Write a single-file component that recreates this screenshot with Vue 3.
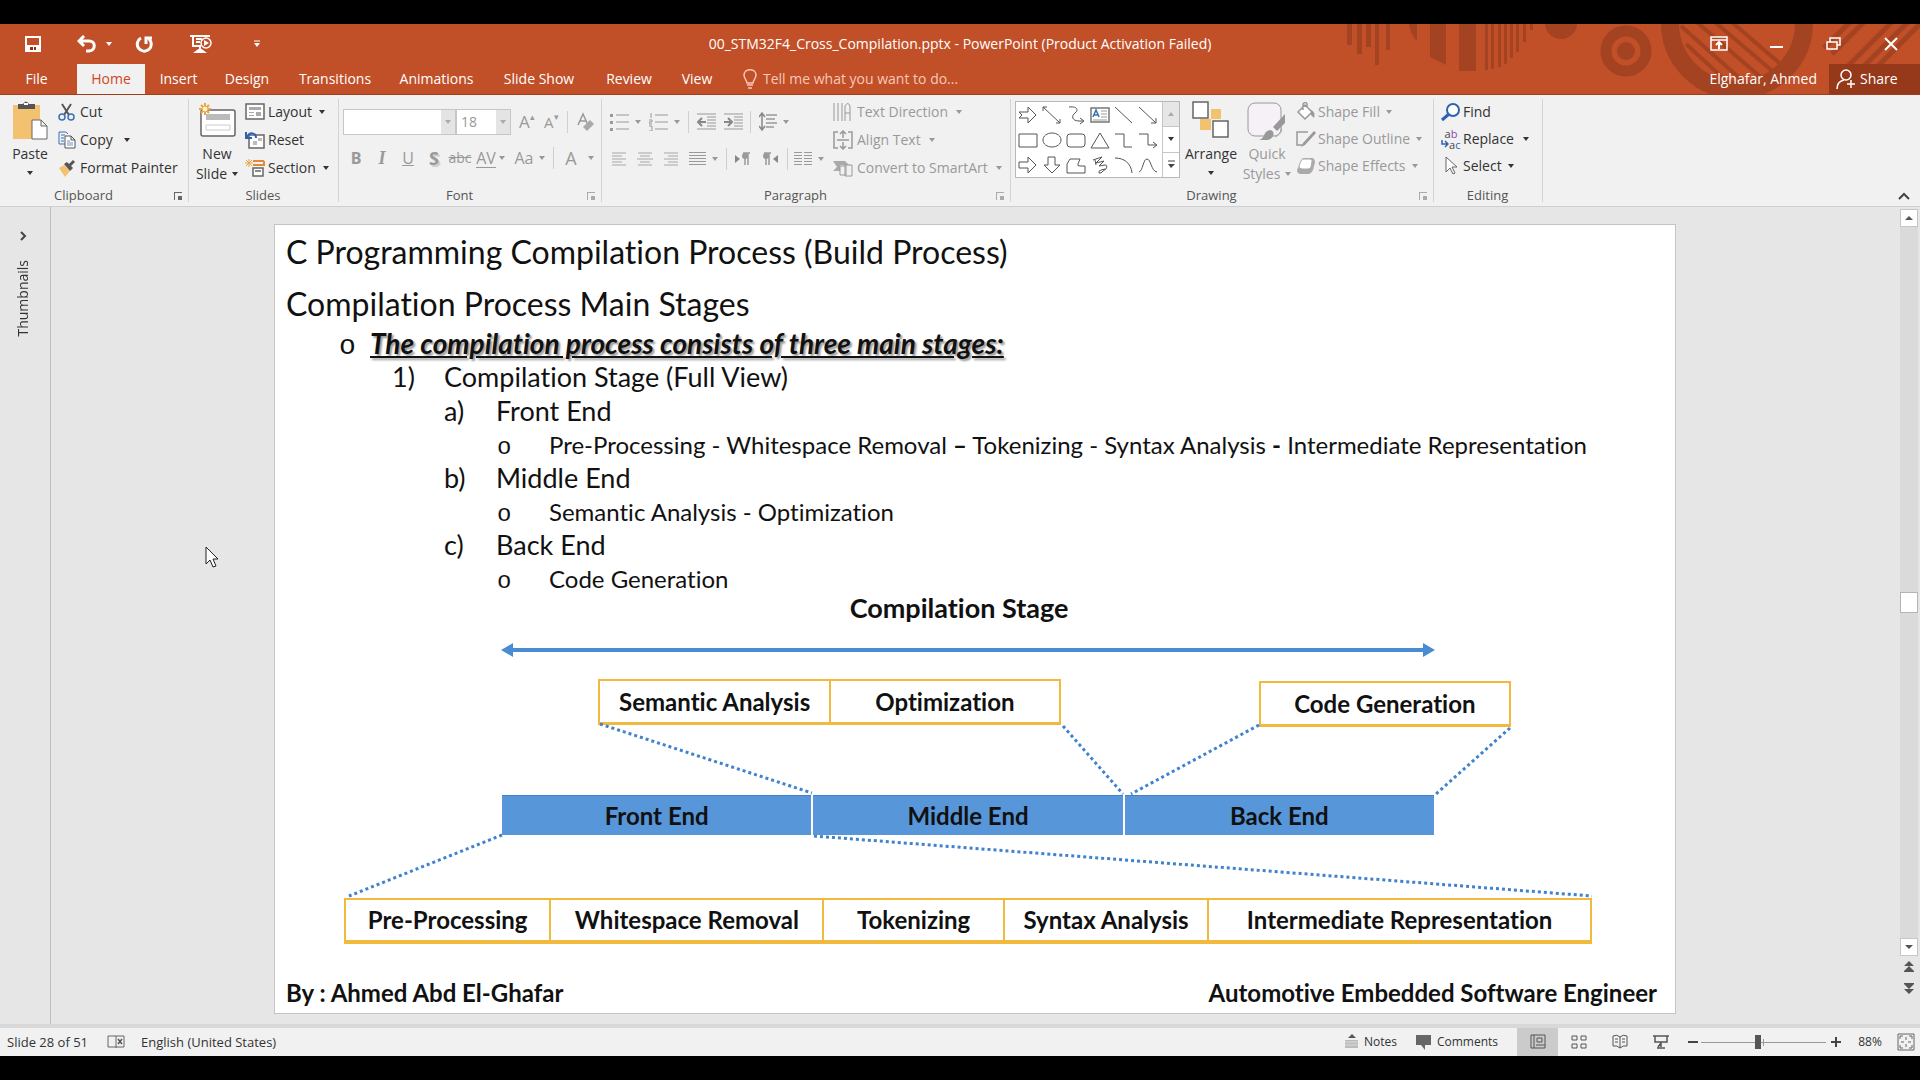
<script setup>
import { ref } from 'vue'

const zoom = ref(45)

const tabs = ['File', 'Home', 'Insert', 'Design', 'Transitions', 'Animations', 'Slide Show', 'Review', 'View']

const outline = [
  { level: 1, mark: 'o', text: 'The compilation process consists of three main stages:' },
  { level: 2, mark: '1)', text: 'Compilation Stage (Full View)' },
  { level: 3, mark: 'a)', text: 'Front End' },
  { level: 4, mark: 'o', text: 'Pre-Processing - Whitespace Removal <b>–</b> Tokenizing - Syntax Analysis <b>-</b> Intermediate Representation' },
  { level: 3, mark: 'b)', text: 'Middle End' },
  { level: 4, mark: 'o', text: 'Semantic Analysis - Optimization' },
  { level: 3, mark: 'c)', text: 'Back End' },
  { level: 4, mark: 'o', text: 'Code Generation' },
]

const shapes = [
  'M1 7h9V2l8 8-8 8v-5H1l3-3z',
  'M1 2l17 16M1 6V2h4M18 14v4h-4',
  'M3 2c8-1 10 3 6 6s-3 8 4 8h4M14 13l4 3-4 3',
  '',
  'M1 2l17 16',
  'M1 2l17 16M18 13v5h-5',
  'M1 4h18v13H1z',
  'M10 3c5 0 9 3 9 7s-4 7-9 7-9-3-9-7 4-7 9-7z',
  'M4 4h12q3 0 3 3v7q0 3-3 3H4q-3 0-3-3V7q0-3 3-3z',
  'M10 3l9 15H1z',
  'M1 4h9v13h8',
  'M1 4h9v11h8M15 12l4 3-4 3',
  'M1 7h9V2l8 8-8 8v-5H1z',
  'M6 2h7v8h5l-8 8-8-8h4z',
  'M4 4h10l-2 5q-1 2 2 2h5v7H1V9z',
  'M3 5l9-3-6 6 8-2-5 5 6-1q3 0 1 4l-3 2q-2 3-4 2-1-2 2-3l4-1M5 5l1 5',
  'M1 3c9 0 16 5 17 15',
  'M1 17c4-1 4-13 8-13s4 12 10 13',
]
</script>

<template>
  <div class="screen">
    <header class="top">
      <svg class="deco" viewBox="0 0 580 70" width="580" height="70" aria-hidden="true">
        <g fill="#a44322">
          <path d="M7 0h5v21H7zM17 0h5v30h-5zM26 0h5v23h-5zM35 0h4v41h-4zM46 0h4v26h-4zM69 0h8v17q-6-5-8-17zM90 0h16v41l-16-8zM119 0h17v47h-17z" />
          <path d="M145 0h3v46h-3zM151 0h3v45h-3zM158 0h3v43h-3zM164 0h3v40h-3zM170 0h3v34h-3zM176 0h3v28h-3zM183 0h3v18h-3zM190 0h3v6h-3z" />
          <circle cx="221" cy="-1" r="16" /><circle cx="286" cy="27" r="9" />
        </g>
        <g fill="none" stroke="#a44322">
          <circle cx="286" cy="27" r="20" stroke-width="11" />
          <circle cx="397" cy="-1" r="67" stroke-width="18" />
          <path d="M341 2l74 66M346 20l50 46M352-6l72 62M370-6l66 56M380-12l65 56" stroke-width="4" />
          <path d="M502 48l54-54M518 48l54-54M532 48l54-54M484 24l30-30M492 30l36-36" stroke-width="5" />
        </g>
      </svg>
      <div class="titlebar">
        <div class="quick">
          <button aria-label="Save"><svg width="18" height="18" viewBox="0 0 18 18"><path d="M2 2h14v14H2z" fill="none" stroke="#fff" stroke-width="2" /><path d="M2 10h14v6H2z" fill="#fff" /><path d="M6 12h3v3H6zM10 12h2v3h-2z" fill="#a02c10" /></svg></button>
          <button class="undo" aria-label="Undo"><svg width="20" height="18" viewBox="0 0 20 18"><path d="M2 6h10c7 0 7 9 0 10H9M7 1L2 6l5 5" fill="none" stroke="#fff" stroke-width="3" /></svg></button>
          <button class="more" aria-label="Undo history"><i class="caret"></i></button>
          <button class="redo" aria-label="Repeat"><svg width="19" height="18" viewBox="0 0 19 18"><path d="M6 3a7 7 0 1 0 8 1M11 9V3h6" fill="none" stroke="#fff" stroke-width="3" /></svg></button>
          <button class="show" aria-label="Start slide show"><svg width="22" height="20" viewBox="0 0 22 20"><path d="M0 2h20M3 2v10h8M6 5h6M6 8h4M10 13v3M6 18h8l-4-3z" fill="none" stroke="#fff" stroke-width="2" /><circle cx="16" cy="9" r="5" fill="#c14f28" stroke="#fff" stroke-width="1.500" /><path d="M14 6l5 3-5 3z" fill="#fff" /></svg></button>
          <button class="custom" aria-label="Customize toolbar"><svg width="8" height="8" viewBox="0 0 8 8"><path d="M1 1h6" stroke="#fff" /><path d="M1 3h6L4 7z" fill="#fff" /></svg></button>
        </div>
        <div class="title">00_STM32F4_Cross_Compilation.pptx - PowerPoint (Product Activation Failed)</div>
        <div class="window">
          <button aria-label="Ribbon display options"><svg width="18" height="16" viewBox="0 0 18 16"><path d="M1 1h16v13H1zM1 4h16" fill="none" stroke="#fff" stroke-width="1.500" /><path d="M9 13V7M6 9l3-3 3 3" fill="none" stroke="#fff" stroke-width="2" /></svg></button>
          <button aria-label="Minimize"><svg width="14" height="16" viewBox="0 0 14 16"><path d="M0 11h13" stroke="#fff" stroke-width="2" /></svg></button>
          <button aria-label="Restore"><svg width="16" height="16" viewBox="0 0 16 16"><path d="M1 6h10v7H1zM4 6V2h10v7h-3" fill="none" stroke="#fff" stroke-width="1.500" /></svg></button>
          <button aria-label="Close"><svg width="14" height="16" viewBox="0 0 14 16"><path d="M1 2l12 12M13 2L1 14" stroke="#fff" stroke-width="2" /></svg></button>
        </div>
      </div>
      <div class="tabrow">
        <nav class="tabs">
          <button v-for="t in tabs" :key="t" :class="{ active: t === 'Home' }">{{ t }}</button>
        </nav>
        <label class="tell">
          <svg width="14" height="20" viewBox="0 0 14 20"><path d="M4 14c0-3-3-4-3-8 0-7 12-7 12 0 0 4-3 5-3 8zM4 16h6M5 19h4" fill="none" stroke="#f6c9b8" stroke-width="1.500" /></svg>
          <input type="text" placeholder="Tell me what you want to do..." />
        </label>
        <button class="user">Elghafar, Ahmed</button>
        <button class="share"><svg width="20" height="20" viewBox="0 0 20 20"><circle cx="10" cy="6" r="5" fill="none" stroke="#fff" stroke-width="1.500" /><path d="M1 20c0-5 3-8 7-9M15 11v8M11 15h8" fill="none" stroke="#fff" stroke-width="1.500" /></svg>Share</button>
      </div>
    </header>

    <section class="ribbon">
      <div class="group clipboard">
        <div class="body">
          <button class="big paste">
            <svg width="36" height="40" viewBox="0 0 36 40"><path d="M1 4h27v34H1z" fill="#f3c271" /><path d="M6 3h5q3-5 6 0h6v5H6z" fill="#555" /><path d="M12 3h4" stroke="#fff" stroke-width="2" /><path d="M20 19h9l6 6v13H20zM29 19v6h6" fill="#fff" stroke="#666" /></svg>
            <span>Paste</span><i class="caret"></i>
          </button>
          <div class="stack">
            <button><svg width="18" height="18" viewBox="0 0 18 18"><path d="M4 1l7 11M13 1L6 12" stroke="#555" stroke-width="2" /><circle cx="4" cy="14" r="3" fill="none" stroke="#3c71b4" stroke-width="1.500" /><circle cx="13" cy="14" r="3" fill="none" stroke="#3c71b4" stroke-width="1.500" /></svg>Cut</button>
            <button><svg width="18" height="18" viewBox="0 0 18 18"><path d="M7 13H1V1h7l2 2M3 4h4M3 7h3M3 10h3" fill="none" stroke="#3c71b4" /><path d="M7 5h6l4 4v8H7zM13 5v4h4" fill="#fff" stroke="#555" /><path d="M9 10h3M9 12h6M9 14h6" stroke="#6f93c4" /></svg>Copy<i class="caret wide"></i></button>
            <button><svg width="18" height="18" viewBox="0 0 18 18"><path d="M1 9l5-3 6 6-5 6z" fill="#f3c271" /><path d="M6 5l3-2 2 2 4-4 2 2-4 4 2 2-3 3z" fill="#555" /></svg>Format Painter</button>
          </div>
        </div>
        <div class="label">Clipboard</div><button class="launch dark" aria-label="Clipboard options"></button>
      </div>

      <div class="group slides">
        <div class="body">
          <button class="big">
            <svg width="40" height="40" viewBox="0 0 40 40"><rect x="4" y="9" width="34" height="26" rx="2" fill="#fff" stroke="#666" stroke-width="1.500" /><path d="M9 13h24v6H9z" fill="#bbb" /><path d="M9 24h24v5H9z" fill="none" stroke="#ccc" /><path d="M8 2v12M2 8h12M4 4l8 8M12 4l-8 8" stroke="#e9a544" stroke-width="2" /><circle cx="8" cy="8" r="3" fill="#fff2cf" stroke="#e9a544" /></svg>
            <span>New</span><span>Slide<i class="caret"></i></span>
          </button>
          <div class="stack">
            <button><svg width="20" height="18" viewBox="0 0 20 18"><path d="M1 1h18v15H1z" fill="#fff" stroke="#666" stroke-width="1.500" /><path d="M4 4h12v3H4zM4 9h5v1H4zM4 12h5v1H4zM11 9h5v4h-5z" fill="#aaa" /></svg>Layout<i class="caret"></i></button>
            <button><svg width="20" height="18" viewBox="0 0 20 18"><path d="M4 4h15v13H4z" fill="#fff" stroke="#666" stroke-width="1.500" /><path d="M8 10h4v4H8zM13 7h4v3h-4z" fill="#bbb" /><path d="M2 6c3-6 9-4 9 1M1 1v6h6" fill="none" stroke="#2d62ae" stroke-width="2" /></svg>Reset</button>
            <button><svg width="20" height="18" viewBox="0 0 20 18"><path d="M8 2h11M8 6h11V2" fill="none" stroke="#e28a35" stroke-width="2" /><path d="M8 9h10v8H8zM10 12h6" fill="#fff" stroke="#666" stroke-width="1.500" /><path d="M4 0v8M0 4h8M1 1l6 6M7 1L1 7" stroke="#e9a544" /></svg>Section<i class="caret"></i></button>
          </div>
        </div>
        <div class="label">Slides</div>
      </div>

      <div class="group font off">
        <div class="body">
          <div class="line combos">
            <span class="combo family"><select aria-label="Font" disabled><option></option></select><i class="caret"></i></span>
            <span class="combo size"><select aria-label="Font size" disabled><option>18</option></select><i class="caret"></i></span>
            <button class="glyph" disabled>A<sup>▴</sup></button>
            <button class="glyph small" disabled>A<sup>▾</sup></button>
            <i class="sep"></i>
            <button disabled aria-label="Clear formatting"><svg width="18" height="20" viewBox="0 0 18 20"><path d="M1 13L6 2l5 11M3 9h6" fill="none" stroke="#999" stroke-width="1.500" /><path d="M6 15l7-7 4 4-7 7z" fill="#aaa" /></svg></button>
          </div>
          <div class="line styles">
            <button disabled><b>B</b></button><button disabled><em>I</em></button><button disabled><u>U</u></button>
            <button disabled class="shadow"><b>S</b></button><button disabled class="strike"><s>abc</s></button>
            <button disabled class="spacing"><span>AV</span></button><i class="caret"></i>
            <button disabled class="case">Aa</button><i class="caret"></i><i class="sep"></i>
            <button disabled class="color">A</button><i class="caret"></i>
          </div>
        </div>
        <div class="label">Font</div><button class="launch" aria-label="Font options"></button>
      </div>

      <div class="group para off">
        <div class="body">
          <div class="tools">
            <div class="line one">
              <button disabled aria-label="Bullets"><svg width="19" height="18" viewBox="0 0 19 18"><path d="M6 2h13M6 9h13M6 16h13" stroke="#999" /><path d="M0 1h3v3H0zM0 8h3v3H0zM0 15h3v3H0z" fill="#999" /></svg></button><i class="caret"></i>
              <button disabled aria-label="Numbering"><svg width="19" height="18" viewBox="0 0 19 18"><path d="M6 2h13M6 9h13M6 16h13M2 0v5M0 7h3v2H0v2h3M0 13h3v5H0" fill="none" stroke="#999" /></svg></button><i class="caret"></i>
              <i class="sep"></i>
              <button disabled aria-label="Decrease indent"><svg width="19" height="18" viewBox="0 0 19 18"><path d="M0 1h19M10 4h9M10 7h9M10 10h9M10 13h9M0 16h19" stroke="#999" /><path d="M1 9h8M5 5L1 9l4 4" fill="none" stroke="#888" stroke-width="2" /></svg></button>
              <button disabled aria-label="Increase indent"><svg width="19" height="18" viewBox="0 0 19 18"><path d="M0 1h19M10 4h9M10 7h9M10 10h9M10 13h9M0 16h19" stroke="#999" /><path d="M0 9h8M4 5l4 4-4 4" fill="none" stroke="#888" stroke-width="2" /></svg></button>
              <i class="sep"></i>
              <button disabled aria-label="Line spacing"><svg width="18" height="20" viewBox="0 0 18 20"><path d="M7 3h11M7 7h9M7 11h11M7 15h8" stroke="#999" stroke-width="1.500" /><path d="M3 1v17M0 5l3-4 3 4M0 14l3 4 3-4" fill="none" stroke="#888" stroke-width="1.500" /></svg></button><i class="caret"></i>
            </div>
            <div class="line two">
              <button disabled aria-label="Align left"><svg width="14" height="14" viewBox="0 0 14 14"><path d="M0 1h14M0 4h10M0 7h14M0 10h10M0 13h14" stroke="#ccc" stroke-width="2" /></svg></button>
              <button disabled aria-label="Center"><svg width="16" height="14" viewBox="0 0 16 14"><path d="M1 1h14M3 4h10M0 7h16M3 10h10M1 13h14" stroke="#ccc" stroke-width="2" /></svg></button>
              <button disabled aria-label="Align right"><svg width="14" height="14" viewBox="0 0 14 14"><path d="M0 1h14M4 4h10M0 7h14M4 10h10M0 13h14" stroke="#ccc" stroke-width="2" /></svg></button>
              <button disabled aria-label="Justify"><svg width="17" height="14" viewBox="0 0 17 14"><path d="M0 .5h17M0 3.500h17M0 6.500h17M0 9.500h17M0 12.500h17" stroke="#999" /></svg></button><i class="caret"></i>
              <i class="sep"></i>
              <button disabled aria-label="Left to right"><svg width="16" height="14" viewBox="0 0 16 14"><path d="M0 3l5 4-5 4z" fill="#888" /><path d="M10 1v12M13 1v12M8 1h7" stroke="#999" stroke-width="1.500" /><circle cx="10" cy="4" r="3" fill="#999" /></svg></button>
              <button disabled aria-label="Right to left"><svg width="16" height="14" viewBox="0 0 16 14"><path d="M16 3l-5 4 5 4z" fill="#888" /><path d="M4 1v12M7 1v12M2 1h7" stroke="#999" stroke-width="1.500" /><circle cx="4" cy="4" r="3" fill="#999" /></svg></button>
              <i class="sep"></i>
              <button disabled aria-label="Columns"><svg width="18" height="14" viewBox="0 0 18 14"><path d="M0 .5h8M0 3.500h8M0 6.500h8M0 9.500h8M0 12.500h8M10 .5h8M10 3.500h8M10 6.500h8M10 9.500h8M10 12.500h8" stroke="#999" /></svg></button><i class="caret"></i>
            </div>
          </div>
          <div class="stack">
            <button disabled><svg width="20" height="20" viewBox="0 0 20 20"><path d="M1 1v18M5 1v18M9 1v18M12 19V4q3-5 5 0v15M12 11h5" fill="none" stroke="#999" /></svg>Text Direction<i class="caret"></i></button>
            <button disabled><svg width="20" height="20" viewBox="0 0 20 20"><path d="M5 2H1v16h4M15 2h4v16h-4M4 10h12M10 1v7M10 12v7M7 4l3-3 3 3M7 16l3 3 3-3" fill="none" stroke="#999" stroke-width="1.500" /></svg>Align Text<i class="caret"></i></button>
            <button disabled><svg width="20" height="18" viewBox="0 0 20 18"><path d="M0 2h12l4 4h-9v6H0l4-4z" fill="#aaa" /><path d="M7 7h6v9H7zM12 6h7v11h-7z" fill="#f1f1f1" stroke="#999" /></svg>Convert to SmartArt<i class="caret"></i></button>
          </div>
        </div>
        <div class="label">Paragraph</div><button class="launch" aria-label="Paragraph options"></button>
      </div>

      <div class="group drawing">
        <div class="body">
          <div class="gallery">
            <div class="cells">
              <button v-for="(d, i) in shapes" :key="i" aria-label="Shape">
                <svg width="20" height="20" viewBox="0 0 20 20">
                  <path v-if="d" :d="d" fill="none" stroke="#555" />
                  <template v-else><path d="M1 3h18v14H1z" fill="#fff" stroke="#777" stroke-width="1.500" /><path d="M3 12l3-7 3 7M4 10h4" fill="none" stroke="#3c71b4" stroke-width="1.500" /><path d="M11 6h6M11 9h6M11 12h6M3 15h14" stroke="#999" /></template>
                </svg>
              </button>
            </div>
            <div class="scroller">
              <button class="dim" aria-label="Previous shapes"><i class="caret up"></i></button>
              <button aria-label="Next shapes"><i class="caret"></i></button>
              <button aria-label="All shapes"><svg width="9" height="9" viewBox="0 0 9 9"><path d="M1 1h7" stroke="#444" /><path d="M1 4h7L4 8z" fill="#444" /></svg></button>
            </div>
          </div>
          <button class="big arrange">
            <svg width="38" height="38" viewBox="0 0 38 38"><path d="M19 8h10v10H19zM8 18h11v11H8z" fill="#f3c271" /><path d="M1 1h15v16H1zM21 20h15v16H21z" fill="#fff" stroke="#666" stroke-width="1.500" /></svg>
            <span>Arrange</span><i class="caret"></i>
          </button>
          <button class="big styles-btn" disabled>
            <svg width="40" height="40" viewBox="0 0 40 40"><rect x="1" y="2" width="33" height="33" rx="7" fill="#f5f1f7" stroke="#999" /><path d="M38 13v9l-8 8-4-4z" fill="#999" /><path d="M12 39c6-1 4-9 11-10 6 1 4 9-3 10z" fill="#999" /><path d="M28 36c5-2 8-6 6-10" fill="none" stroke="#aaa" /></svg>
            <span>Quick</span><span>Styles<i class="caret"></i></span>
          </button>
          <div class="stack">
            <button disabled><svg width="20" height="20" viewBox="0 0 20 20"><path d="M9 3l7 7-7 7-7-7zM7 8V2q3-3 4 0v3" fill="#fff" stroke="#999" stroke-width="1.500" /><path d="M15 8q5 2 3 8l-3-3z" fill="#999" /></svg>Shape Fill<i class="caret"></i></button>
            <button disabled><svg width="20" height="20" viewBox="0 0 20 20"><path d="M12 3H1v13h5" fill="none" stroke="#999" stroke-width="1.500" /><path d="M18 2l2 2-11 12-4 2 2-4z" fill="#999" /></svg>Shape Outline<i class="caret"></i></button>
            <button disabled><svg width="20" height="20" viewBox="0 0 20 20"><path d="M7 2h10q2 2 2 4l-2 8q-2 4-5 4H4q-3-1-3-4z" fill="#aaa" /><path d="M7 3h7q3 0 2 3l-1 5q-1 2-3 2H6q-3 0-3-3l2-5q1-2 2-2z" fill="#fff" stroke="#aaa" /></svg>Shape Effects<i class="caret"></i></button>
          </div>
        </div>
        <div class="label">Drawing</div><button class="launch" aria-label="Drawing options"></button>
      </div>

      <div class="group editing">
        <div class="body">
          <div class="stack">
            <button><svg width="20" height="20" viewBox="0 0 20 20"><circle cx="12" cy="8" r="6" fill="#fff" stroke="#2d62ae" stroke-width="2" /><path d="M8 12l-7 6" stroke="#2d62ae" stroke-width="3" /></svg>Find</button>
            <button><span class="swap"><span>a<b>b</b></span><span class="to"><svg width="8" height="8" viewBox="0 0 8 8"><path d="M1 0v4h5M4 1l3 3-3 3" fill="none" stroke="#2d62ae" stroke-width="1.500" /></svg>a<i>c</i></span></span>Replace<i class="caret wide"></i></button>
            <button><svg width="20" height="20" viewBox="0 0 20 20"><path d="M5 1v15l4-4 3 6 2-1-3-6h5z" fill="#fff" stroke="#666" /></svg>Select<i class="caret"></i></button>
          </div>
        </div>
        <div class="label">Editing</div>
      </div>
      <button class="collapse" aria-label="Collapse ribbon"><svg width="12" height="8" viewBox="0 0 12 8"><path d="M1 7l5-5 5 5" fill="none" stroke="#444" stroke-width="2" /></svg></button>
    </section>

    <main class="work">
      <aside class="thumbs">
        <button aria-label="Expand thumbnails"><svg width="8" height="10" viewBox="0 0 8 10"><path d="M2 1l4 4-4 4" fill="none" stroke="#444" stroke-width="2" /></svg></button>
        <span>Thumbnails</span>
      </aside>
      <div class="stage">
        <svg class="cursor" width="14" height="22" viewBox="0 0 14 22" aria-hidden="true"><path d="M1 1v17l4-4 3 7 3-1-3-7h5z" fill="#fff" stroke="#222" /></svg>
        <article class="slide">
          <h1>C Programming Compilation Process (Build Process)</h1>
          <h2>Compilation Process Main Stages</h2>
          <ul class="outline">
            <li v-for="(o, i) in outline" :key="i" :class="'l' + o.level">
              <span class="mark" :class="{ ring: o.mark === 'o' }">{{ o.mark }}</span><span class="txt" v-html="o.text"></span>
            </li>
          </ul>
          <div class="diagram">
            <svg class="links" viewBox="0 0 1248 347" preserveAspectRatio="none" aria-hidden="true">
              <path d="M256 129l212 69M719 131l60 68M915 130l-128 69M1166 133l-74 66M158 240L5 301M470 241l778 60" fill="none" stroke="#3f82ce" stroke-width="3" stroke-dasharray="3 3" />
            </svg>
            <h3>Compilation Stage</h3>
            <svg class="span" viewBox="0 0 932 14" preserveAspectRatio="none" aria-hidden="true"><path d="M0 7L12 0v5h908V0l12 7-12 7V9H12v5z" fill="#4a8cd3" /></svg>
            <div class="upper">
              <div class="cell first">Semantic Analysis</div>
              <div class="cell">Optimization</div>
              <div class="cell gen">Code Generation</div>
            </div>
            <div class="ends"><div>Front End</div><div>Middle End</div><div>Back End</div></div>
            <div class="lower">
              <div>Pre-Processing</div><div>Whitespace Removal</div><div>Tokenizing</div><div>Syntax Analysis</div><div>Intermediate Representation</div>
            </div>
          </div>
          <footer><span>By : Ahmed Abd El-Ghafar</span><span>Automotive Embedded Software Engineer</span></footer>
        </article>
      </div>
      <div class="vscroll">
        <button aria-label="Scroll up"><i class="caret up"></i></button>
        <div class="track"><div class="thumb"></div></div>
        <button aria-label="Scroll down"><i class="caret"></i></button>
        <button class="jump" aria-label="Previous slide"><svg width="10" height="12" viewBox="0 0 10 12"><path d="M5 0l5 5H0zM5 5l5 5H0zM0 10h10v1H0z" fill="#555" /></svg></button>
        <button class="jump" aria-label="Next slide"><svg width="10" height="12" viewBox="0 0 10 12"><path d="M0 1h10L5 6zM0 6h10l-5 5zM0 0h10v1H0z" fill="#555" /></svg></button>
      </div>
    </main>

    <footer class="status">
      <span class="count">Slide 28 of 51</span>
      <button class="spell" aria-label="Spelling"><svg width="18" height="16" viewBox="0 0 18 16"><path d="M9 2v12M9 2H1v11h8M9 2h8v11H9" fill="none" stroke="#666" /><path d="M11 5l4 5M15 5l-4 5" stroke="#555" stroke-width="1.500" /></svg></button>
      <button class="lang">English (United States)</button>
      <div class="right">
        <button class="notes"><svg width="14" height="16" viewBox="0 0 14 16"><path d="M7 0l4 4H3z" fill="#555" /><path d="M0 6h13v8H0z" fill="#bbb" /><path d="M0 8h13M0 11h13" stroke="#ddd" /></svg>Notes</button>
        <button class="comments"><svg width="16" height="16" viewBox="0 0 16 16"><path d="M0 1h15v10H9v5l-4-5H0z" fill="#666" /></svg>Comments</button>
        <button class="view on" aria-label="Normal"><svg width="16" height="16" viewBox="0 0 16 16"><path d="M1 1h14v13H1zM4 1v13M6 11h9M7 4h5v4H7z" fill="none" stroke="#555" /></svg></button>
        <button class="view" aria-label="Slide sorter"><svg width="16" height="16" viewBox="0 0 16 16"><path d="M1 2h5v4H1zM10 2h5v4h-5zM1 10h5v4H1zM10 10h5v4h-5z" fill="none" stroke="#555" /></svg></button>
        <button class="view" aria-label="Reading view"><svg width="16" height="16" viewBox="0 0 16 16"><path d="M8 3v11M8 3Q5 0 1 2v10q4-1 7 2 3-3 7-2V2q-4-2-7 1M3 5h3M3 8h3M10 5h3M10 8h3" fill="none" stroke="#555" /></svg></button>
        <button class="view" aria-label="Slide show"><svg width="16" height="16" viewBox="0 0 16 16"><path d="M0 2h16M2 2v6h12V2M8 8v5M4 14h8M8 9l-3 4" fill="none" stroke="#555" stroke-width="1.500" /></svg></button>
        <button class="step" aria-label="Zoom out"><svg width="12" height="12" viewBox="0 0 12 12"><path d="M1 6h10" stroke="#444" stroke-width="2" /></svg></button>
        <input v-model="zoom" type="range" min="0" max="100" aria-label="Zoom" />
        <button class="step" aria-label="Zoom in"><svg width="12" height="12" viewBox="0 0 12 12"><path d="M1 6h10M6 1v10" stroke="#444" stroke-width="2" /></svg></button>
        <button class="pct">88%</button>
        <button class="fit" aria-label="Fit slide"><svg width="18" height="18" viewBox="0 0 18 18"><path d="M1 1h16v16H1z" fill="none" stroke="#666" /><path d="M9 4v3M9 11v3M4 9h3M11 9h3M3 6V3h3M12 3h3v3M3 12v3h3M12 15h3v-3" fill="none" stroke="#666" /></svg></button>
      </div>
    </footer>
  </div>
</template>

<style>
body { margin: 0; background: #000; }
</style>

<style scoped>
* { box-sizing: border-box; }
.screen {
  min-height: 100vh; display: flex; flex-direction: column;
  padding: 24px 0; background: #000;
  font: 14px/20px "Open Sans", "Noto Sans", sans-serif; color: #333;
}
button, input, select { font: inherit; color: inherit; }
button { border: 0; padding: 0; background: none; display: flex; align-items: center; white-space: nowrap; }
svg { display: block; flex: none; }
.caret { flex: none; width: 0; height: 0; border: 3px solid transparent; border-top: 4px solid currentColor; border-bottom: 0; }
.caret.up { border-top: 0; border-bottom: 4px solid currentColor; }

.top { position: relative; background: #c14f28; color: #fff; overflow: hidden; border-bottom: 1px solid #a03c1c; }
.deco { position: absolute; right: 0; top: 0; }
.titlebar { position: relative; height: 40px; display: grid; grid-template-columns: 1fr auto 1fr; align-items: center; }
.quick { display: flex; align-items: center; padding-left: 24px; }
.undo { margin-left: 35px; }
.more { margin-left: 9px; }
.redo { margin-left: 23px; }
.show { margin-left: 36px; }
.custom { margin-left: 41px; }
.window { display: flex; justify-content: flex-end; gap: 42px; padding-right: 22px; }
.tabrow { position: relative; height: 30px; display: flex; }
.tabs { display: grid; grid-template-columns: 73px 74px 63px 74px 102px 101px 104px 76px 60px; }
.tabs button { justify-content: center; }
.tabs .active { background: #f1f1f1; color: #d0451f; margin: 0 2px 0 4px; }
.tell { display: flex; align-items: center; gap: 6px; margin-left: 16px; flex: 1; }
.tell input { border: 0; background: none; width: 260px; padding: 0; outline: 0; }
.tell input::placeholder { color: #f6c9b8; opacity: 1; }
.user { margin-right: 12px; }
.share { width: 91px; padding-left: 7px; gap: 4px; background: #96391b; }

.ribbon { display: flex; height: 112px; background: #f1f1f1; border-bottom: 1px solid #cfcfcf; }
.group { position: relative; flex: none; display: flex; flex-direction: column; padding-top: 3px; }
.group::after { content: ""; position: absolute; right: 0; top: 4px; bottom: 4px; width: 1px; background: #d4d4d4; }
.body { display: flex; height: 87px; }
.label { height: 20px; line-height: 20px; font-size: 13px; text-align: center; color: #555; padding-right: 22px; }
.slides .label, .editing .label { padding-right: 2px; }
.off, .group :disabled { color: #999; }
.off .label { color: #555; }
.launch { position: absolute; right: 7px; bottom: 6px; width: 8px; height: 8px; border-left: 1px solid #aaa; border-top: 1px solid #aaa; }
.launch::after { content: ""; width: 4px; height: 4px; margin: 2px 0 0 3px; background: #aaa; }
.launch.dark { border-color: #666; }
.launch.dark::after { background: #666; }
.big { flex-direction: column; gap: 0; }
.big .caret { margin-top: 7px; }
.big span { display: flex; align-items: center; }
.big span .caret { margin: 0 0 0 5px; }
.big svg { margin: 3px 0; }
.stack { display: flex; flex-direction: column; }
.stack button { height: 28px; gap: 4px; }
.stack .caret { margin-left: 4px; }
.stack .caret.wide { margin-left: 7px; }
.clipboard { width: 189px; }
.clipboard .body { padding-left: 12px; }
.clipboard .big { width: 36px; margin-right: 10px; }
.slides { width: 150px; }
.slides .body { padding-left: 6px; }
.slides .big { width: 44px; margin-right: 6px; }
.slides .stack button { gap: 3px; }
.font { width: 263px; }
.font .body { flex-direction: column; padding-left: 4px; }
.line { display: flex; align-items: center; }
.combos { height: 26px; margin-top: 11px; }
.combo { position: relative; height: 26px; display: flex; border: 1px solid #c6c6c6; }
.combo select { appearance: none; width: 100%; border: 0; border-right: 14px solid #e4e4e4; padding: 0 4px; background: #fff; opacity: 1; border-radius: 0; }
.combo .caret { position: absolute; right: 4px; top: 10px; color: #aaa; }
.family { width: 113px; }
.size { width: 55px; }
.glyph { margin-left: 8px; width: 17px; font-size: 17px; }
.glyph.small { font-size: 15px; }
.glyph sup { font-size: 9px; line-height: 9px; align-self: flex-start; }
.sep { flex: none; width: 1px; height: 22px; background: #d0d0d0; }
.combos .sep { margin: 0 9px 0 6px; }
.styles { height: 28px; margin-top: 9px; font-size: 16px; }
.styles button { width: 26px; justify-content: center; }
.styles em { font-family: "Liberation Serif", serif; font-weight: bold; font-size: 18px; }
.shadow b { text-shadow: 2px 2px 1px #ccc; font-size: 18px; }
.styles .strike { font-size: 14px; }
.styles .spacing span { border-bottom: 1px solid #999; line-height: 18px; }
.styles .case { width: 30px; margin-left: 4px; }
.styles .sep { margin-left: 8px; }
.styles .color { font-size: 18px; width: 34px; }
.para { width: 409px; }
.para .body { padding-left: 8px; }
.tools { width: 223px; }
.one { height: 36px; padding-top: 6px; margin-top: 3px; }
.one button + .caret { margin: 0 8px 0 6px; }
.one .sep { margin-right: 8px; }
.one .sep + button + button { margin: 0 7px 0 8px; }
.two { height: 28px; margin-top: 8px; }
.two button { margin-left: 2px; margin-right: 9px; }
.two button + .caret { margin-left: -3px; }
.two .sep { margin: 0 6px 0 8px; }
.two button + .sep { margin: 0 4px 0 0; }
.drawing { width: 423px; }
.drawing .body { padding-left: 4px; }
.gallery { display: flex; height: 77px; margin-top: 3px; border: 1px solid #b8b8b8; background: #fff; width: 165px; }
.cells { display: grid; grid-template-columns: repeat(6, 24px); grid-auto-rows: 25px; width: 147px; }
.cells button { justify-content: center; }
.scroller { width: 17px; display: flex; flex-direction: column; border-left: 1px solid #c6c6c6; }
.scroller button { flex: 1; justify-content: center; border-top: 1px solid #c6c6c6; }
.scroller .dim { background: #e6e6e6; color: #aaa; border: 0; }
.arrange { width: 60px; margin: 0 1px; }
.arrange svg { margin: 3px 0 5px; }
.styles-btn { width: 50px; margin-right: 4px; }
.drawing .stack button { height: 27px; gap: 2px; }
.editing { width: 109px; }
.editing .body { padding-left: 7px; }
.editing .stack button { height: 27px; gap: 2px; }
.swap { width: 20px; display: flex; flex-direction: column; font-size: 11px; line-height: 11px; color: #444; }
.swap b { color: #8a44c0; font-weight: normal; }
.swap i { color: #2d62ae; font-style: normal; }
.swap .to { display: flex; align-items: center; }
.collapse { margin: auto 10px 6px auto; }

.work { flex: 1; display: flex; background: #e6e6e6; border-bottom: 4px solid #d8d8d8; }
.thumbs { width: 51px; border-right: 1px solid #bdbdbd; display: flex; flex-direction: column; align-items: center; padding-right: 4px; }
.thumbs button { margin: 24px 0 19px; }
.thumbs span { writing-mode: vertical-rl; transform: rotate(180deg); }
.stage { position: relative; flex: 1; padding: 17px 24px 9px; }
.cursor { position: absolute; left: 154px; top: 339px; }
.slide {
  max-width: 1402px; min-height: 790px; margin: 0 auto; padding: 5px 18px 0 11px;
  display: flex; flex-direction: column;
  background: #fff; border: 1px solid #c4c4c4; color: #111; font-family: Lato, "Open Sans", sans-serif;
  font-variant-ligatures: none;
}
h1, h2, h3 { margin: 0; font-weight: normal; }
h1, h2 { font-size: 32px; line-height: 44px; }
h2 { margin-top: 8px; }
.outline { list-style: none; margin: 0; padding: 0; }
.outline li { display: flex; align-items: baseline; height: 34px; line-height: 34px; font-size: 27px; }
.mark { flex: none; width: 52px; }
.ring { font-family: "Liberation Mono", monospace; line-height: 20px; }
.outline .l1 { padding-left: 53px; font-size: 28px; }
.l1 .mark { width: 31px; }
.l1 .txt { font-weight: bold; font-style: italic; text-decoration: underline; text-shadow: 2px 2px 2px #999; }
.l2 { padding-left: 106px; }
.l3 { padding-left: 158px; }
.outline .l4 { padding-left: 211px; font-size: 24px; height: 33px; line-height: 33px; white-space: nowrap; }
.diagram { position: relative; margin: 0 65px 0 58px; font-size: 24px; font-weight: bold; }
.links { position: absolute; left: 0; top: 0; width: 100%; height: 347px; }
h3 { font-size: 27px; line-height: 26px; font-weight: bold; text-align: center; padding-right: 18px; }
.span { width: calc(100% - 314px); height: 14px; margin: 22px 157px; }
.upper { display: grid; grid-template-columns: 231fr 231fr 198fr 252fr; padding: 0 81px 0 254px; height: 48px; }
.cell { height: 46px; display: flex; align-items: center; justify-content: center; border: 2px solid #f2b93f; border-bottom-width: 3px; }
.first { border-right: 0; }
.upper .gen { margin-top: 2px; grid-column: 4; }
.ends { position: relative; display: grid; grid-template-columns: repeat(3, 1fr); gap: 2px; margin: 68px 158px 63px; height: 40px; }
.ends div { background: #5696d9; border-top: 1px solid #3f82ce; display: flex; align-items: center; justify-content: center; }
.lower { display: grid; grid-template-columns: 204fr 274fr 181fr 205fr 384fr; height: 46px; border: 2px solid #f2b93f; border-bottom-width: 4px; }
.lower div { display: flex; align-items: center; justify-content: center; min-width: 0; white-space: nowrap; }
.lower div + div { border-left: 2px solid #f2b93f; }
.slide footer { margin: auto 0 4px; display: flex; justify-content: space-between; font-size: 24px; font-weight: bold; line-height: 32px; }

.vscroll { width: 21px; padding: 2px 2px 0 1px; display: flex; flex-direction: column; }
.vscroll button { height: 18px; justify-content: center; background: #fff; border: 1px solid #c6c6c6; color: #555; }
.vscroll .caret { border-left-width: 4px; border-right-width: 4px; }
.vscroll .jump { background: none; border: 0; height: 22px; }
.vscroll .jump:last-child { margin-bottom: 24px; }
.track { flex: 1; display: flex; flex-direction: column; background: #dadada; }
.track::before { content: ""; flex: 365 0 0; }
.track::after { content: ""; flex: 325 0 0; }
.thumb { height: 21px; background: #fff; border: 1px solid #b4b4b4; }

.status { display: flex; align-items: center; height: 28px; background: #f1f1f1; font-size: 13px; padding-left: 7px; }
.spell { margin-left: 19px; }
.lang { margin-left: 16px; }
.right { margin-left: auto; display: flex; align-items: center; height: 100%; font-size: 12px; }
.right button { height: 28px; gap: 5px; }
.comments { margin: 0 19px; }
.right .view { width: 41px; justify-content: center; }
.right .on { background: #cbcbcb; }
.step { margin-left: 6px; }
.right input { appearance: none; width: 125px; height: 16px; margin: 0 0 0 2px; background: linear-gradient(#999, #999) center / 100% 1px no-repeat, linear-gradient(#999, #999) center / 1px 7px no-repeat; }
.right input::-webkit-slider-thumb { appearance: none; width: 6px; height: 14px; background: #555; }
.right input + .step { margin-left: 4px; }
.pct { width: 40px; justify-content: center; margin-left: 8px; }
.fit { margin: 0 5px 0 7px; }
</style>
